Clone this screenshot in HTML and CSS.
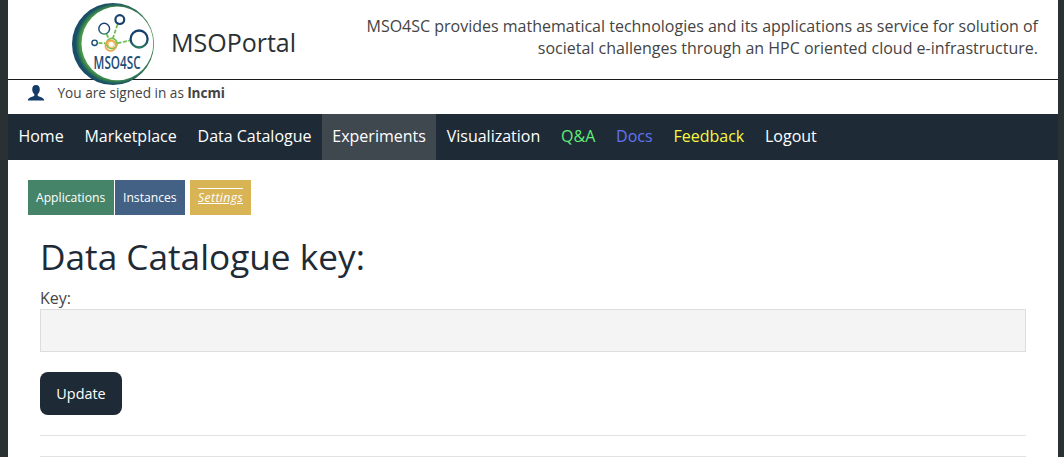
FILE: index.html
```html
<!DOCTYPE html>
<html lang="en">
<head>
<meta charset="utf-8">
<title>MSOPortal</title>
<link rel="stylesheet" href="styles.css">
</head>
<body>
<div class="page">
  <header class="header">
    <a class="brand">
      <svg class="logo" viewBox="0 0 110 90" width="110" height="90" aria-label="MSO4SC">
        <defs>
          <radialGradient id="ring" gradientUnits="userSpaceOnUse" cx="56" cy="43.7" r="43">
            <stop offset="0.75" stop-color="#55ad45"/>
            <stop offset="0.84" stop-color="#439447"/>
            <stop offset="0.94" stop-color="#195066"/>
            <stop offset="1" stop-color="#194b6a"/>
          </radialGradient>
          <linearGradient id="node" x1="0" y1="0" x2="0" y2="1">
            <stop offset="0.5" stop-color="#17406e"/>
            <stop offset="1" stop-color="#2d7a62"/>
          </linearGradient>
        </defs>
        <circle cx="53" cy="44" r="41" fill="url(#ring)"/>
        <ellipse cx="57.4" cy="43.4" rx="35.9" ry="36.8" fill="#fff"/>
        <g fill="none">
          <path d="M38.5 43.2H45M46.5 34l2 4M57.5 24.5l-4.7 14M57.5 43.2l12.5-2.7" stroke="#67bf4b" stroke-width="1.7" stroke-dasharray="4 1.5"/>
          <circle cx="51.8" cy="43.5" r="5.2" stroke="#72c253" stroke-width="1.8"/>
          <circle cx="50.7" cy="45.7" r="5.3" stroke="#efa347" stroke-width="1.7"/>
          <circle cx="51.2" cy="44.4" r="3.1" stroke="#f0b95d" stroke-width="1"/>
          <circle cx="34.6" cy="42.8" r="2.7" stroke="#1c4d70" stroke-width="1.4"/>
          <circle cx="44.2" cy="28.7" r="5.4" stroke="url(#node)" stroke-width="1.4"/>
          <circle cx="59.8" cy="19.6" r="4.4" stroke="#17406e" stroke-width="2.2"/>
          <circle cx="79.1" cy="39" r="8.5" stroke="url(#node)" stroke-width="2.3"/>
        </g>
        <text class="logo-text" x="33.6" y="69" textLength="47" lengthAdjust="spacingAndGlyphs">MSO4SC</text>
      </svg>
      <span class="brand-name">MSOPortal</span>
    </a>
    <p class="tagline">MSO4SC provides mathematical technologies and its applications as service for solution of<br>societal challenges through an HPC oriented cloud e-infrastructure.</p>
  </header>
  <div class="userbar">
    <svg class="user-icon" viewBox="0 0 18 16" width="18" height="16"><path d="M9 0c2.400 0 3.800 1.600 3.800 4.200 0 2.200-.9 4-2.100 5v1.500c.7 1 6.300 1.100 6.500 4.800H.8c.2-3.700 5.800-3.800 6.500-4.800V9.200c-1.200-1-2.100-2.800-2.100-5C5.200 1.600 6.600 0 9 0z" fill="#153c66"/></svg>
    <span>You are signed in as <b>lncmi</b></span>
  </div>
  <nav class="nav">
    <a>Home</a><a>Marketplace</a><a>Data Catalogue</a><a class="active">Experiments</a><a>Visualization</a><a class="qa">Q&amp;A</a><a class="docs">Docs</a><a class="feedback">Feedback</a><a>Logout</a>
  </nav>
  <div class="tabs">
    <a class="tab applications">Applications</a><a class="tab instances">Instances</a><a class="tab settings"><span>Settings</span></a>
  </div>
  <main class="content">
    <h1>Data Catalogue key:</h1>
    <label for="key">Key:</label>
    <input id="key" type="text">
    <button type="button">Update</button>
    <hr>
    <hr>
  </main>
</div>
</body>
</html>
```
FILE: styles.css
```css
* { box-sizing: border-box; }
body {
  margin: 0;
  padding: 0 6px 0 8px;
  height: 457px;
  overflow: hidden;
  background: #293133;
  color: #444;
  font-family: "Open Sans", sans-serif;
  font-size: 16px;
}
.page { height: 457px; background: #fff; }
.header {
  display: flex;
  justify-content: space-between;
  height: 80px;
  padding: 0 20px 0 52px;
  border-bottom: 1px solid #1b1b1b;
}
.brand { display: flex; align-items: flex-start; }
.logo { display: block; flex: none; }
.logo-text {
  font-family: "Open Sans", sans-serif;
  font-weight: 600;
  font-size: 18px;
  fill: #1d4c77;
}
.brand-name {
  margin-left: 1px;
  padding-top: 24px;
  font-size: 25px;
  line-height: 36px;
  color: #293133;
}
.tagline {
  margin: 15px 0 0;
  line-height: 22px;
  text-align: right;
  white-space: nowrap;
}
.userbar {
  display: flex;
  height: 34px;
  padding: 4px 0 0 20px;
  gap: 12.5px;
  font-size: 13.6px;
  line-height: 18px;
}
.user-icon { margin: 1px 0 0 -1px; }
.nav { display: flex; height: 46px; background: #1e2b37; }
.nav a { padding: 0 10.42px; line-height: 44px; color: #fff; }
.nav .active { background: #3f474f; }
.nav .qa { color: #62ed76; }
.nav .docs { color: #6272f5; }
.nav .feedback { color: #f8f840; }
.tabs { display: flex; padding: 20px 20px 0; }
.tab {
  height: 35px;
  padding: 0 8px;
  font-size: 12.16px;
  line-height: 35px;
  color: #fff;
}
.applications { width: 86px; background: #458468; }
.instances { width: 70px; margin-left: 1px; background: #426185; }
.settings { width: 61px; margin-left: 5px; background: #d8b455; font-style: italic; letter-spacing: 0.4px; }
.settings span { text-decoration: underline overline; }
.content { padding: 17px 32px 0; }
h1 {
  margin: 0;
  font-size: 35.2px;
  font-weight: 400;
  line-height: 49px;
  color: #1e2b37;
}
label { display: block; margin-top: 6px; line-height: 22px; }
input {
  display: block;
  width: 100%;
  height: 43px;
  border: 1px solid #ddd;
  background: #f4f4f4;
}
button {
  display: block;
  width: 82px;
  height: 43px;
  margin-top: 20px;
  padding: 0;
  border: 0;
  border-radius: 8px;
  background: #1e2b37;
  color: #fff;
  font: 14.4px "Open Sans", sans-serif;
}
hr { height: 1px; margin: 20px 0 0; border: 0; background: #e2e2e2; }
```
